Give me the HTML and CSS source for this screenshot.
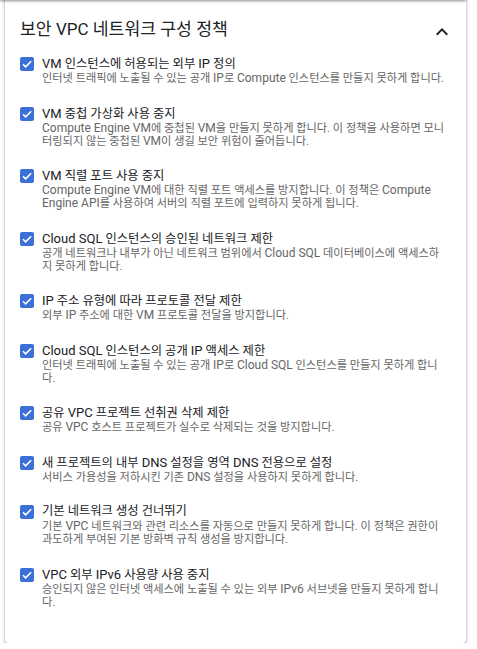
FILE: index.html
```html
<!DOCTYPE html>
<html lang="ko">
<head>
<meta charset="utf-8">
<link rel="stylesheet" href="styles.css">
</head>
<body>
<div class="topshade"></div>
<section class="card">
  <header class="card-head">
    <h2 class="card-title">보안 <span class="en">VPC</span> 네트워크 구성 정책</h2>
    <svg class="chev" viewBox="0 0 24 24" width="24" height="24"><path d="M12 8l-6 6 1.41 1.41L12 10.83l4.59 4.58L18 14z" fill="#202124"/></svg>
  </header>
  <ul class="list">
    <li class="item">
      <span class="cb"><svg viewBox="0 0 14 14" width="14" height="14"><path d="M3 7.2l2.6 2.6L11.2 4.2" fill="none" stroke="#fff" stroke-width="1.6"/></svg></span>
      <div class="txt">
        <div class="t"><span class="en">VM</span> 인스턴스에 허용되는 외부 <span class="en">IP</span> 정의</div>
        <div class="d"><span class="ln">인터넷 트래픽에 노출될 수 있는 공개 <span class="en">IP</span>로 <span class="en">Compute</span> 인스턴스를 만들지 못하게 합니다.</span></div>
      </div>
    </li>
    <li class="item">
      <span class="cb"><svg viewBox="0 0 14 14" width="14" height="14"><path d="M3 7.2l2.6 2.6L11.2 4.2" fill="none" stroke="#fff" stroke-width="1.6"/></svg></span>
      <div class="txt">
        <div class="t"><span class="en">VM</span> 중첩 가상화 사용 중지</div>
        <div class="d"><span class="ln"><span class="en">Compute Engine VM</span>에 중첩된 <span class="en">VM</span>을 만들지 못하게 합니다. 이 정책을 사용하면 모니</span><span class="ln">터링되지 않는 중첩된 <span class="en">VM</span>이 생길 보안 위험이 줄어듭니다.</span></div>
      </div>
    </li>
    <li class="item">
      <span class="cb"><svg viewBox="0 0 14 14" width="14" height="14"><path d="M3 7.2l2.6 2.6L11.2 4.2" fill="none" stroke="#fff" stroke-width="1.6"/></svg></span>
      <div class="txt">
        <div class="t"><span class="en">VM</span> 직렬 포트 사용 중지</div>
        <div class="d"><span class="ln"><span class="en">Compute Engine VM</span>에 대한 직렬 포트 액세스를 방지합니다. 이 정책은 <span class="en">Compute</span></span><span class="ln"><span class="en">Engine API</span>를 사용하여 서버의 직렬 포트에 입력하지 못하게 됩니다.</span></div>
      </div>
    </li>
    <li class="item">
      <span class="cb"><svg viewBox="0 0 14 14" width="14" height="14"><path d="M3 7.2l2.6 2.6L11.2 4.2" fill="none" stroke="#fff" stroke-width="1.6"/></svg></span>
      <div class="txt">
        <div class="t"><span class="en">Cloud SQL</span> 인스턴스의 승인된 네트워크 제한</div>
        <div class="d"><span class="ln">공개 네트워크나 내부가 아닌 네트워크 범위에서 <span class="en">Cloud SQL</span> 데이터베이스에 액세스하</span><span class="ln">지 못하게 합니다.</span></div>
      </div>
    </li>
    <li class="item">
      <span class="cb"><svg viewBox="0 0 14 14" width="14" height="14"><path d="M3 7.2l2.6 2.6L11.2 4.2" fill="none" stroke="#fff" stroke-width="1.6"/></svg></span>
      <div class="txt">
        <div class="t"><span class="en">IP</span> 주소 유형에 따라 프로토콜 전달 제한</div>
        <div class="d"><span class="ln">외부 <span class="en">IP</span> 주소에 대한 <span class="en">VM</span> 프로토콜 전달을 방지합니다.</span></div>
      </div>
    </li>
    <li class="item">
      <span class="cb"><svg viewBox="0 0 14 14" width="14" height="14"><path d="M3 7.2l2.6 2.6L11.2 4.2" fill="none" stroke="#fff" stroke-width="1.6"/></svg></span>
      <div class="txt">
        <div class="t"><span class="en">Cloud SQL</span> 인스턴스의 공개 <span class="en">IP</span> 액세스 제한</div>
        <div class="d"><span class="ln">인터넷 트래픽에 노출될 수 있는 공개 <span class="en">IP</span>로 <span class="en">Cloud SQL</span> 인스턴스를 만들지 못하게 합니</span><span class="ln">다.</span></div>
      </div>
    </li>
    <li class="item">
      <span class="cb"><svg viewBox="0 0 14 14" width="14" height="14"><path d="M3 7.2l2.6 2.6L11.2 4.2" fill="none" stroke="#fff" stroke-width="1.6"/></svg></span>
      <div class="txt">
        <div class="t">공유 <span class="en">VPC</span> 프로젝트 선취권 삭제 제한</div>
        <div class="d"><span class="ln">공유 <span class="en">VPC</span> 호스트 프로젝트가 실수로 삭제되는 것을 방지합니다.</span></div>
      </div>
    </li>
    <li class="item">
      <span class="cb"><svg viewBox="0 0 14 14" width="14" height="14"><path d="M3 7.2l2.6 2.6L11.2 4.2" fill="none" stroke="#fff" stroke-width="1.6"/></svg></span>
      <div class="txt">
        <div class="t">새 프로젝트의 내부 <span class="en">DNS</span> 설정을 영역 <span class="en">DNS</span> 전용으로 설정</div>
        <div class="d"><span class="ln">서비스 가용성을 저하시킨 기존 <span class="en">DNS</span> 설정을 사용하지 못하게 합니다.</span></div>
      </div>
    </li>
    <li class="item">
      <span class="cb"><svg viewBox="0 0 14 14" width="14" height="14"><path d="M3 7.2l2.6 2.6L11.2 4.2" fill="none" stroke="#fff" stroke-width="1.6"/></svg></span>
      <div class="txt">
        <div class="t">기본 네트워크 생성 건너뛰기</div>
        <div class="d"><span class="ln">기본 <span class="en">VPC</span> 네트워크와 관련 리소스를 자동으로 만들지 못하게 합니다. 이 정책은 권한이</span><span class="ln">과도하게 부여된 기본 방화벽 규칙 생성을 방지합니다.</span></div>
      </div>
    </li>
    <li class="item">
      <span class="cb"><svg viewBox="0 0 14 14" width="14" height="14"><path d="M3 7.2l2.6 2.6L11.2 4.2" fill="none" stroke="#fff" stroke-width="1.6"/></svg></span>
      <div class="txt">
        <div class="t"><span class="en">VPC</span> 외부 <span class="en">IPv6</span> 사용량 사용 중지</div>
        <div class="d"><span class="ln">승인되지 않은 인터넷 액세스에 노출될 수 있는 외부 <span class="en">IPv6</span> 서브넷을 만들지 못하게 합니</span><span class="ln">다.</span></div>
      </div>
    </li>
  </ul>
</section>
</body>
</html>
```
FILE: styles.css
```css
html, body {
  margin: 0;
  padding: 0;
  background: #fff;
}
body {
  font-family: Roboto, "Noto Sans CJK KR", sans-serif;
  color: #202124;
  overflow: hidden;
}
.topshade {
  position: fixed;
  top: -6px;
  left: 0;
  width: 466px;
  height: 6px;
  box-shadow: 0 1px 3px rgba(0,0,0,0.45);
  background: #bbb;
  z-index: 2;
}
.card {
  width: 461px;
  box-sizing: border-box;
  margin: -4px 0 0 5px;
  padding: 21px 10px 34px 15px;
  background: #fff;
  border-radius: 0 0 3px 3px;
  box-shadow: 0 1px 2px rgba(0,0,0,0.3), 0 1px 3px 1px rgba(0,0,0,0.12);
}
.card-head {
  display: flex;
  justify-content: space-between;
  align-items: flex-start;
  height: 24px;
}
.card-title {
  margin: 0;
  font-size: 17.2px;
  font-weight: 400;
  line-height: 24px;
  height: 24px;
}
.card-title .en {
  font-size: 17px;
}
.chev {
  margin: 3px 2px 0 0;
}
.list {
  list-style: none;
  margin: 14px 0 0;
  padding: 0;
  display: flex;
  flex-direction: column;
  gap: 19.5px;
}
.item {
  display: grid;
  grid-template-columns: 14px 1fr;
  column-gap: 8px;
}
.cb {
  width: 14px;
  height: 14px;
  margin-top: 2px;
  background: #3d6fd8;
  border-radius: 2px;
  display: flex;
}
.t {
  font-size: 12.3px;
  line-height: 17px;
  height: 17px;
  color: #202124;
  white-space: nowrap;
}
.t .en {
  font-size: 13px;
}
.d {
  font-size: 11.2px;
  color: #666;
  white-space: nowrap;
}
.ln {
  display: block;
  height: 13px;
  line-height: 13px;
}
.d .en {
  font-size: 12px;
}
```
